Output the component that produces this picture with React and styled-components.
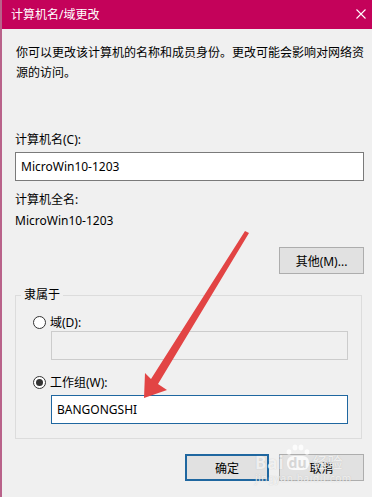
import React from 'react'
import styled, { createGlobalStyle } from 'styled-components'

const GlobalStyle = createGlobalStyle`
  html, body {
    margin: 0;
    padding: 0;
    background: #f0f0f0;
  }
  * {
    box-sizing: border-box;
  }
`

const FONT = `"Noto Sans", "Noto Sans CJK SC", sans-serif`

const Window = styled.div`
  position: relative;
  width: 372px;
  height: 497px;
  overflow: hidden;
  background: #f0f0f0;
  border-left: 2px solid #b9628a;
  font-family: ${FONT};
  font-size: 12px;
  color: #000;
`

const TitleBar = styled.div`
  height: 29px;
  background: #c4025a;
  display: flex;
  align-items: center;
  justify-content: space-between;
  padding: 0 5px 0 9px;
  color: #fff;
`

const Title = styled.span`
  font-size: 12px;
  line-height: 16px;
`

const CloseButton = styled.div`
  width: 10px;
  height: 10px;
  margin-right: 1px;
  margin-top: -2px;
  display: flex;
`

const Body = styled.div`
  padding: 14px 8px 0 13px;
  display: flex;
  flex-direction: column;
`

const Text = styled.div`
  line-height: 20px;
  max-width: ${({ $narrow }) => ($narrow ? '350px' : 'none')};
  margin-top: ${({ $gap }) => $gap || 0}px;
  padding-left: ${({ $indent }) => $indent || 0}px;
`

const TextBox = styled.div`
  height: 29px;
  display: flex;
  align-items: center;
  padding-left: 5px;
  margin-top: ${({ $gap }) => $gap || 0}px;
  background: ${({ $disabled }) => ($disabled ? '#f0f0f0' : '#fff')};
  border: 1px solid
    ${({ $disabled, $focused }) =>
      $disabled ? '#cccccc' : $focused ? '#1f67a0' : '#7a7a7a'};
  font-size: 12px;
`

const ButtonRow = styled.div`
  display: flex;
  justify-content: flex-end;
  gap: 10px;
  margin-top: ${({ $gap }) => $gap || 0}px;
`

const Button = styled.div`
  width: ${({ $w }) => $w || 85}px;
  height: 27px;
  display: flex;
  align-items: center;
  justify-content: center;
  background: #e1e1e1;
  border: ${({ $primary }) => ($primary ? '2px solid #1f67a0' : '1px solid #adadad')};
  font-size: 12px;
`

const Group = styled.fieldset`
  margin: 13px 2px 0 0;
  padding: 0 13px 14px 35px;
  border: 1px solid #dcdcdc;
  min-width: 0;
`

const Legend = styled.legend`
  padding: 0 3px;
  margin-left: -30px;
  line-height: 16px;
  font-size: 12px;
`

const RadioRow = styled.div`
  height: 16px;
  display: flex;
  align-items: center;
  gap: 4px;
  margin-left: -18px;
  margin-top: ${({ $gap }) => $gap || 0}px;
`

const RadioCircle = styled.span`
  width: 13px;
  height: 13px;
  border-radius: 50%;
  border: 1px solid #333;
  background: #fff;
  display: flex;
  align-items: center;
  justify-content: center;

  &::after {
    content: '';
    width: 7px;
    height: 7px;
    border-radius: 50%;
    background: ${({ $checked }) => ($checked ? '#333' : 'transparent')};
  }
`

const Overlay = styled.svg`
  position: absolute;
  left: -2px;
  top: 0;
  pointer-events: none;
`

const Watermark = styled.div`
  position: absolute;
  left: 253px;
  top: 443px;
  display: flex;
  flex-direction: column;
  align-items: flex-start;
  color: rgba(255, 255, 255, 0.75);
  font-family: ${FONT};
  pointer-events: none;
  text-shadow: 0 0 1px rgba(150, 150, 150, 0.5);
`

const MarkTop = styled.div`
  display: flex;
  align-items: flex-end;
  height: 27px;
`

const MarkLatin = styled.span`
  font-size: 17px;
  font-weight: 700;
  line-height: 15px;
  letter-spacing: 1px;
`

const Paw = styled.div`
  display: flex;
  flex-direction: column;
  align-items: center;
  margin: 0 2px 0 1px;
`

const DuPad = styled.span`
  height: 14px;
  padding: 0 2px;
  border-radius: 6px;
  background: rgba(255, 255, 255, 0.78);
  color: #d6d6d6;
  font-size: 14px;
  font-weight: 700;
  line-height: 13px;
  text-shadow: none;
`

const MarkCjk = styled.span`
  font-size: 15px;
  line-height: 16px;
  margin-left: 1px;
`

const MarkSmall = styled.div`
  margin-top: 2px;
  font-size: 10px;
  line-height: 12px;
  letter-spacing: 0.6px;
`

const App = () => {
  return (
    <>
      <GlobalStyle />
      <Window>
        <TitleBar>
          <Title>计算机名/域更改</Title>
          <CloseButton>
            <svg width="10" height="10" viewBox="0 0 10 10">
              <path d="M0.5 0.5 L9.5 9.5 M9.5 0.5 L0.5 9.5" stroke="#fff" strokeWidth="1.1" />
            </svg>
          </CloseButton>
        </TitleBar>
        <Body>
          <Text $indent={1} $narrow>
            你可以更改该计算机的名称和成员身份。更改可能会影响对网络资源的访问。
          </Text>
          <Text $gap={47}>计算机名(C):</Text>
          <TextBox $gap={2}>MicroWin10-1203</TextBox>
          <Text $gap={9}>计算机全名:</Text>
          <Text $gap={1}>MicroWin10-1203</Text>
          <ButtonRow $gap={16}>
            <Button>其他(M)...</Button>
          </ButtonRow>
          <Group>
            <Legend>隶属于</Legend>
            <RadioRow $gap={11}>
              <RadioCircle />
              域(D):
            </RadioRow>
            <TextBox $disabled $gap={1} />
            <RadioRow $gap={14}>
              <RadioCircle $checked />
              工作组(W):
            </RadioRow>
            <TextBox $focused $gap={5}>BANGONGSHI</TextBox>
          </Group>
          <ButtonRow $gap={15}>
            <Button $primary $w={84}>确定</Button>
            <Button>取消</Button>
          </ButtonRow>
        </Body>
        <Watermark>
          <MarkTop>
            <MarkLatin>Bai</MarkLatin>
            <Paw>
              <svg width="24" height="12" viewBox="0 0 24 12">
                <g fill="rgba(255,255,255,0.78)">
                  <ellipse cx="3" cy="8" rx="2.4" ry="2.8" />
                  <ellipse cx="9" cy="3.5" rx="2.4" ry="3" />
                  <ellipse cx="15" cy="3.5" rx="2.4" ry="3" />
                  <ellipse cx="21" cy="8" rx="2.4" ry="2.8" />
                </g>
              </svg>
              <DuPad>du</DuPad>
            </Paw>
            <MarkCjk>经验</MarkCjk>
          </MarkTop>
          <MarkSmall>jingyan.baidu.com</MarkSmall>
        </Watermark>
        <Overlay width="372" height="497" viewBox="0 0 372 497">
          <polygon
            points="245,231 249,233 158,384 167,390 144,398 145,373 151,379"
            fill="#e24444"
          />
        </Overlay>
      </Window>
    </>
  )
}

export default App
